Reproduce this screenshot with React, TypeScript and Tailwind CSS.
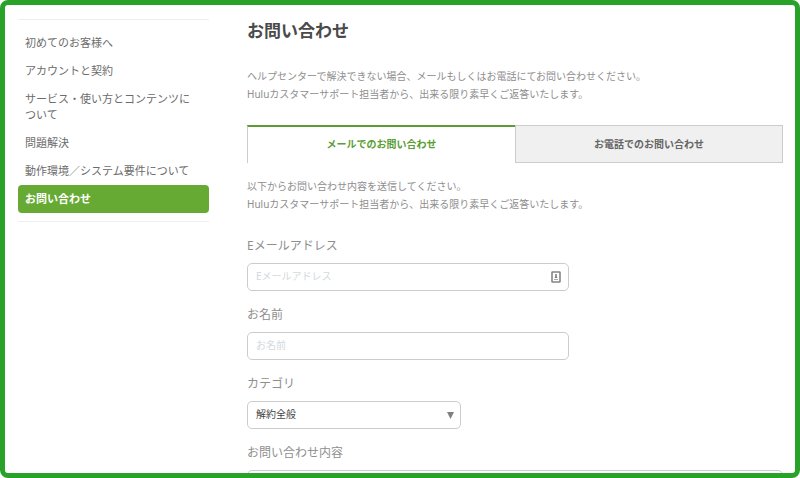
import React, { useState } from 'react';

const NAV_ITEMS = [
  '初めてのお客様へ',
  'アカウントと契約',
  'サービス・使い方とコンテンツについて',
  '問題解決',
  '動作環境／システム要件について',
  'お問い合わせ',
];

const TABS = ['メールでのお問い合わせ', 'お電話でのお問い合わせ'];

const Sidebar = () => (
  <nav className="w-[191px] shrink-0 self-start border-y border-[#eeeeee] pt-[9px] pb-2">
    <ul>
      {NAV_ITEMS.map((item) => (
        <li key={item}>
          <a
            href="#"
            className={`block rounded px-[7px] py-1.5 text-[11px] leading-4 ${
              item === 'お問い合わせ' ? 'bg-[#66aa33] font-bold text-white' : 'pr-4 text-[#6c6c6c]'
            }`}
          >
            {item}
          </a>
        </li>
      ))}
    </ul>
  </nav>
);

const ContactCardIcon = () => (
  <svg viewBox="0 0 10 12" className="h-3 w-2.5" fill="none" aria-hidden="true">
    <rect x="1" y="1" width="8" height="10" rx="0.5" stroke="#858585" strokeWidth="1.6" />
    <circle cx="5" cy="4" r="1" fill="#777777" />
    <path d="M4.2 5h1.6v1.2L6.8 7H3.2l1-.8z" fill="#777777" />
    <path d="M3 8.5h4" stroke="#aaaaaa" />
  </svg>
);

const Field = ({ id, label, children }: { id: string; label: string; children: React.ReactNode }) => (
  <div>
    <label htmlFor={id} className="mb-[9px] block text-[12px] leading-4 text-[#8e8e8e]">
      {label}
    </label>
    {children}
  </div>
);

const INPUT =
  'block h-7 w-full rounded-[5px] border border-[#cccccc] bg-white px-2 pb-0.5 text-[10px] text-[#444444] placeholder:text-[#d3dadd] outline-none';

export default function App() {
  const [activeTab, setActiveTab] = useState(TABS[0]);

  return (
    <div className="flex h-screen gap-[38px] overflow-hidden rounded-lg border-[5px] border-[#28a228] bg-white pt-3.5 pr-3 pl-[13px] font-['Noto_Sans','Noto_Sans_CJK_JP',sans-serif]">
      <Sidebar />

      <main className="min-w-0 flex-1 text-[#8e8e8e]">
        <h1 className="text-[17px] leading-6 font-bold text-[#4a4a4a]">お問い合わせ</h1>

        <p className="mt-6 text-[10px] leading-[18px]">
          ヘルプセンターで解決できない場合、メールもしくはお電話にてお問い合わせください。
          <br />
          Huluカスタマーサポート担当者から、出来る限り素早くご返答いたします。
        </p>

        <div role="tablist" className="mt-[22px] grid grid-cols-2">
          {TABS.map((tab) => (
            <button
              key={tab}
              role="tab"
              aria-selected={activeTab === tab}
              onClick={() => setActiveTab(tab)}
              className={`h-[38px] text-[10px] font-bold ${
                activeTab === tab
                  ? 'border-t-2 border-l border-t-[#5a9e33] border-l-[#cccccc] bg-white pb-0.5 text-[#5a9e33]'
                  : 'border border-[#cccccc] bg-[#f0f0f0] text-[#666666]'
              }`}
            >
              {tab}
            </button>
          ))}
        </div>

        <p className="mt-3.5 text-[10px] leading-[18px]">
          以下からお問い合わせ内容を送信してください。
          <br />
          Huluカスタマーサポート担当者から、出来る限り素早くご返答いたします。
        </p>

        <form className="mt-[25px] flex flex-col gap-4">
          <Field id="email" label="Eメールアドレス">
            <div className="relative w-3/5">
              <input id="email" type="email" placeholder="Eメールアドレス" className={INPUT} />
              <span className="absolute inset-y-0 right-2 flex items-center">
                <ContactCardIcon />
              </span>
            </div>
          </Field>

          <Field id="name" label="お名前">
            <div className="w-3/5">
              <input id="name" type="text" placeholder="お名前" className={INPUT} />
            </div>
          </Field>

          <Field id="category" label="カテゴリ">
            <div className="relative w-2/5">
              <select id="category" className={`${INPUT} appearance-none`}>
                <option>解約全般</option>
              </select>
              <span className="pointer-events-none absolute inset-y-0 right-[7px] flex items-center">
                <svg viewBox="0 0 7 7" className="size-[7px]" aria-hidden="true">
                  <path d="M0 0h7L3.5 7z" fill="#808080" />
                </svg>
              </span>
            </div>
          </Field>

          <Field id="message" label="お問い合わせ内容">
            <textarea
              id="message"
              className="block h-28 w-full resize-none rounded-[5px] border border-[#cccccc] p-2 text-[10px] outline-none"
            />
          </Field>
        </form>
      </main>
    </div>
  );
}
